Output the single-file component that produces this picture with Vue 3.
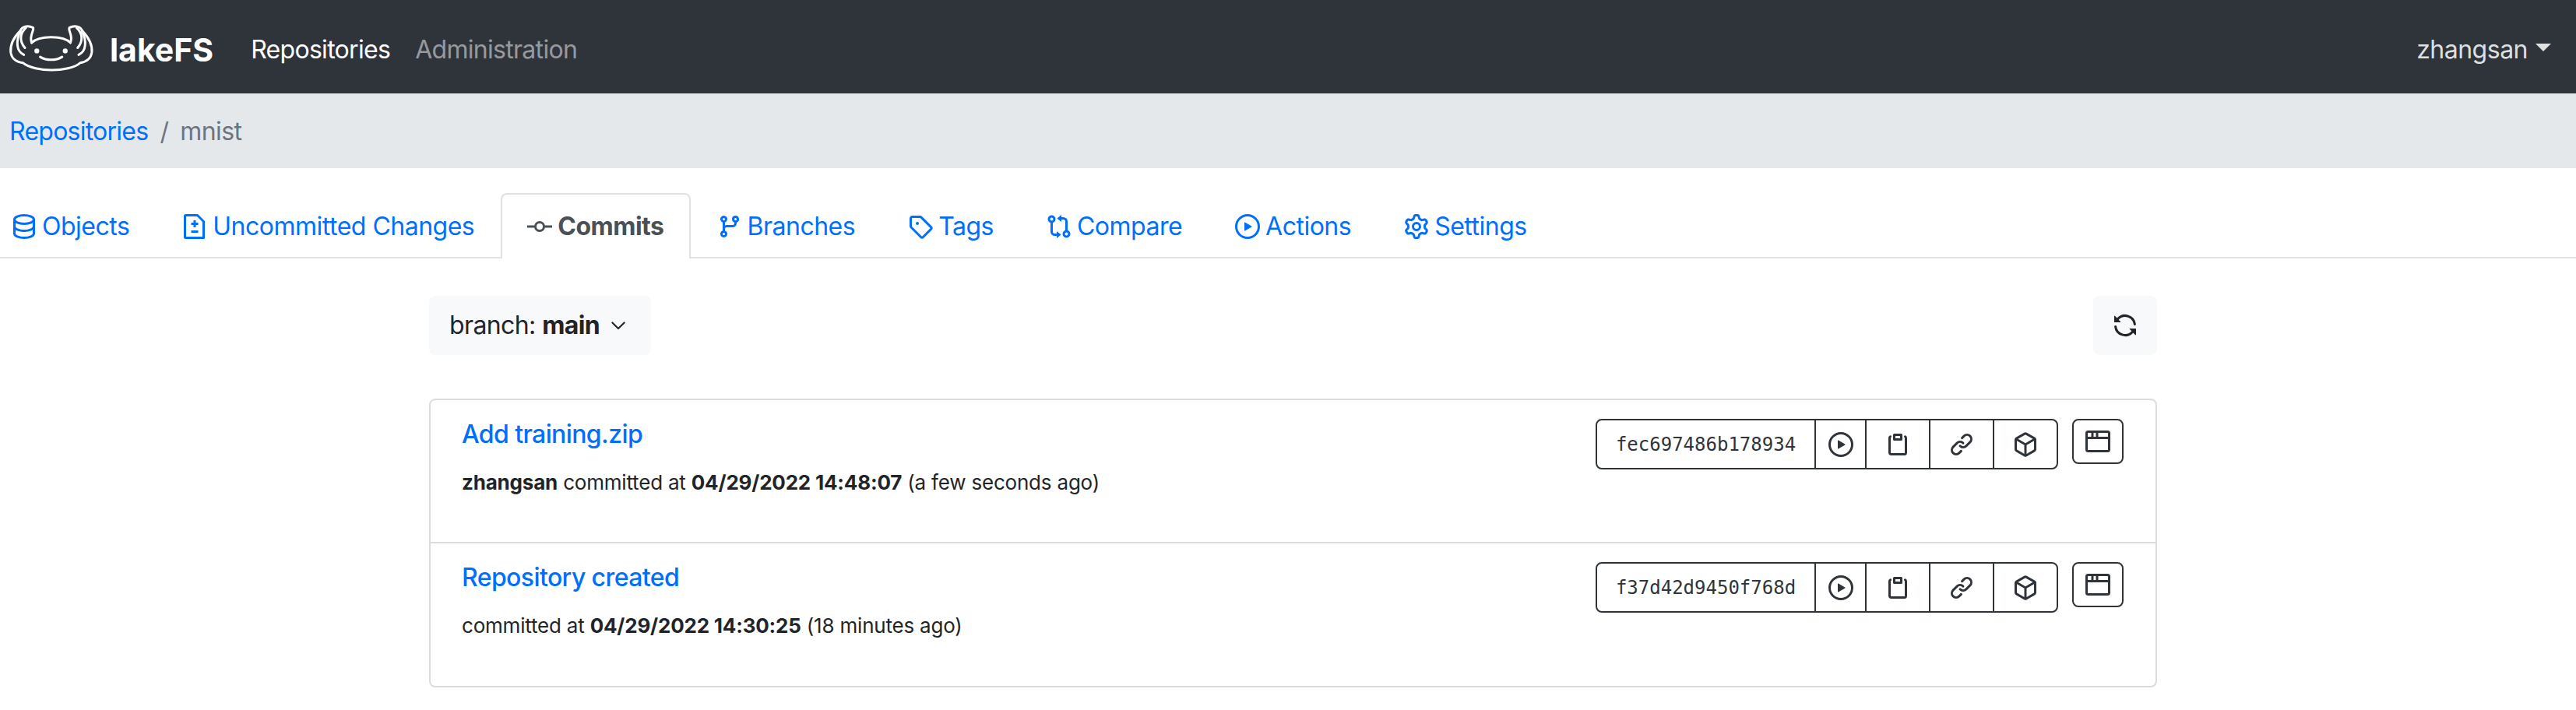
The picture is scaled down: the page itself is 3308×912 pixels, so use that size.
<script setup>
const tabs = [
  { label: "Objects", icon: "db" },
  { label: "Uncommitted Changes", icon: "diff" },
  { label: "Commits", icon: "commit", active: true },
  { label: "Branches", icon: "branch" },
  { label: "Tags", icon: "tag" },
  { label: "Compare", icon: "compare" },
  { label: "Actions", icon: "play" },
  { label: "Settings", icon: "gear" }
];

const paths = {
  branch: "M11.75 2.5a.75.75 0 100 1.5.75.75 0 000-1.5zm-2.25.75a2.25 2.25 0 113 2.122V6A2.5 2.5 0 0110 8.5H6a1 1 0 00-1 1v1.128a2.251 2.251 0 11-1.5 0V5.372a2.25 2.25 0 111.5 0v1.836A2.492 2.492 0 016 7h4a1 1 0 001-1v-.628A2.25 2.25 0 019.5 3.25zM4.25 12a.75.75 0 100 1.5.75.75 0 000-1.5zM3.5 3.25a.75.75 0 111.5 0 .75.75 0 01-1.5 0z",
  tag: "M2.5 7.775V2.75a.25.25 0 01.25-.25h5.025a.25.25 0 01.177.073l6.25 6.25a.25.25 0 010 .354l-5.025 5.025a.25.25 0 01-.354 0l-6.25-6.25a.25.25 0 01-.073-.177zm-1.5 0V2.75C1 1.784 1.784 1 2.75 1h5.025c.464 0 .91.184 1.238.513l6.25 6.25a1.75 1.75 0 010 2.474l-5.026 5.026a1.75 1.75 0 01-2.474 0l-6.25-6.25A1.75 1.75 0 011 7.775zM6 5a1 1 0 100 2 1 1 0 000-2z",
  play: "M1.5 8a6.5 6.5 0 1113 0 6.5 6.5 0 01-13 0zM8 0a8 8 0 100 16A8 8 0 008 0zM6.379 5.227A.25.25 0 006 5.442v5.117a.25.25 0 00.379.214l4.264-2.559a.25.25 0 000-.428L6.379 5.227z",
  gear: "M7.429 1.525a6.593 6.593 0 011.142 0c.036.003.108.036.137.146l.289 1.105c.147.56.55.967.997 1.189.174.086.341.183.501.29.417.278.97.423 1.53.27l1.102-.303c.11-.03.175.016.195.046.219.31.41.641.573.989.014.031.022.11-.059.19l-.815.806c-.411.406-.562.957-.53 1.456a4.588 4.588 0 010 .582c-.032.499.119 1.05.53 1.456l.815.806c.08.08.073.159.059.19a6.494 6.494 0 01-.573.99c-.02.029-.086.074-.195.045l-1.103-.303c-.559-.153-1.112-.008-1.529.27-.16.107-.327.204-.5.29-.449.222-.851.628-.998 1.189l-.289 1.105c-.029.11-.101.143-.137.146a6.613 6.613 0 01-1.142 0c-.036-.003-.108-.037-.137-.146l-.289-1.105c-.147-.56-.55-.967-.997-1.189a4.502 4.502 0 01-.501-.29c-.417-.278-.97-.423-1.53-.27l-1.102.303c-.11.03-.175-.016-.195-.046a6.492 6.492 0 01-.573-.989c-.014-.031-.022-.11.059-.19l.815-.806c.411-.406.562-.957.53-1.456a4.587 4.587 0 010-.582c.032-.499-.119-1.05-.53-1.456l-.815-.806c-.08-.08-.073-.159-.059-.19a6.44 6.44 0 01.573-.99c.02-.029.086-.075.195-.045l1.103.303c.559.153 1.112.008 1.529-.27.16-.107.327-.204.5-.29.449-.222.851-.628.998-1.189l.289-1.105c.029-.11.101-.143.137-.146zM8 0c-.236 0-.47.01-.701.03-.743.065-1.29.615-1.458 1.261l-.29 1.106c-.017.066-.078.158-.211.224a5.994 5.994 0 00-.668.386c-.123.082-.233.09-.3.071L3.27 2.776c-.644-.177-1.392.02-1.82.63a7.977 7.977 0 00-.704 1.217c-.315.675-.111 1.422.363 1.891l.815.806c.05.048.098.147.088.294a6.084 6.084 0 000 .772c.01.147-.038.246-.088.294l-.815.806c-.474.469-.678 1.216-.363 1.891.2.428.436.835.704 1.218.428.609 1.176.806 1.82.63l1.103-.303c.066-.019.176-.011.299.071.213.143.436.272.668.386.133.066.194.158.212.224l.289 1.106c.169.646.715 1.196 1.458 1.26a8.094 8.094 0 001.402 0c.743-.064 1.29-.614 1.458-1.26l.29-1.106c.017-.066.078-.158.211-.224a5.98 5.98 0 00.668-.386c.123-.082.233-.09.3-.071l1.102.302c.644.177 1.392-.02 1.82-.63.268-.382.505-.789.704-1.217.315-.675.111-1.422-.364-1.891l-.814-.806c-.05-.048-.098-.147-.088-.294a6.1 6.1 0 000-.772c-.01-.147.039-.246.088-.294l.814-.806c.475-.469.679-1.216.364-1.891a7.992 7.992 0 00-.704-1.218c-.428-.609-1.176-.806-1.82-.63l-1.103.303c-.066.019-.176.011-.299-.071a5.991 5.991 0 00-.668-.386c-.133-.066-.194-.158-.212-.224L10.16 1.29C9.99.645 9.444.095 8.701.031A8.094 8.094 0 008 0zm1.5 8a1.5 1.5 0 11-3 0 1.5 1.5 0 013 0zM11 8a3 3 0 11-6 0 3 3 0 016 0z",
  sync: "M8 2.5a5.487 5.487 0 00-4.131 1.869l1.204 1.204A.25.25 0 014.896 6H1.25A.25.25 0 011 5.75V2.104a.25.25 0 01.427-.177l1.38 1.38A7.001 7.001 0 0114.95 7.16a.75.75 0 11-1.49.178A5.501 5.501 0 008 2.5zM1.705 8.005a.75.75 0 01.834.656 5.501 5.501 0 009.592 2.97l-1.204-1.204a.25.25 0 01.177-.427h3.646a.25.25 0 01.25.25v3.646a.25.25 0 01-.427.177l-1.38-1.38A7.001 7.001 0 011.05 8.84a.75.75 0 01.656-.834z",
  clippy: "M5.75 1a.75.75 0 00-.75.75v3c0 .414.336.75.75.75h4.5a.75.75 0 00.75-.75v-3a.75.75 0 00-.75-.75h-4.5zm.75 3V2.5h3V4h-3zm-2.874-.467a.75.75 0 00-.752-1.298A1.75 1.75 0 002 3.75v9.5c0 .966.784 1.75 1.75 1.75h8.5A1.75 1.75 0 0014 13.25v-9.5a1.75 1.75 0 00-.874-1.515.75.75 0 10-.752 1.298.25.25 0 01.126.217v9.5a.25.25 0 01-.25.25h-8.5a.25.25 0 01-.25-.25v-9.5a.25.25 0 01.126-.217z",
  link: "M7.775 3.275a.75.75 0 001.06 1.06l1.25-1.25a2 2 0 112.83 2.83l-2.5 2.5a2 2 0 01-2.83 0 .75.75 0 00-1.06 1.06 3.5 3.5 0 004.95 0l2.5-2.5a3.5 3.5 0 00-4.95-4.95l-1.25 1.25zm-4.69 9.64a2 2 0 010-2.83l2.5-2.5a2 2 0 012.83 0 .75.75 0 001.06-1.06 3.5 3.5 0 00-4.95 0l-2.5 2.5a3.5 3.5 0 004.95 4.95l1.25-1.25a.75.75 0 00-1.06-1.06l-1.25 1.25a2 2 0 01-2.83 0z",
  pkg: "M8.878.392a1.75 1.75 0 00-1.756 0l-5.25 3.045A1.75 1.75 0 001 4.951v6.098c0 .624.332 1.2.872 1.514l5.25 3.045a1.75 1.75 0 001.756 0l5.25-3.045c.54-.313.872-.89.872-1.514V4.951c0-.624-.332-1.2-.872-1.514L8.878.392zM7.875 1.69a.25.25 0 01.25 0l4.63 2.685L8 7.133 3.245 4.375l4.63-2.685zM2.5 5.677v5.372c0 .09.047.171.125.216l4.625 2.683V8.432L2.5 5.677zm6.25 8.271l4.625-2.683a.25.25 0 00.125-.216V5.677L8.75 8.432v5.516z"
};

const commits = [
  { title: "Add training.zip", who: "zhangsan", date: "04/29/2022 14:48:07", ago: "(a few seconds ago)", id: "fec697486b178934" },
  { title: "Repository created", who: "", date: "04/29/2022 14:30:25", ago: "(18 minutes ago)", id: "f37d42d9450f768d" }
];
</script>

<template>
  <div class="page">
    <nav class="navbar">
      <a class="brand">
        <svg class="logo" viewBox="30 80 340 190" fill="none" stroke="#fff" stroke-width="9" stroke-linecap="round" stroke-linejoin="round">
          <path d="M122 158C150 130 245 128 272 158" />
          <path d="M122 158C112 130 132 112 128 100C105 88 84 96 78 112C55 135 38 165 41 195C44 218 60 232 88 236C110 255 160 264 200 264C240 264 290 255 310 236C335 232 352 218 355 195C358 165 340 135 318 112C312 96 290 88 268 100C262 112 284 130 272 158" />
          <path d="M100 100C78 120 72 150 96 178M78 112C62 150 60 190 92 205" />
          <path d="M296 100C318 120 324 150 300 178M318 112C334 150 336 190 304 205" />
          <circle cx="142" cy="190" r="5" fill="#fff" />
          <circle cx="252" cy="190" r="5" fill="#fff" />
          <path d="M155 213C180 228 215 228 240 213" />
        </svg>
        <span class="brand-text">lakeFS</span>
      </a>
      <a class="nav-link on">Repositories</a>
      <a class="nav-link">Administration</a>
      <a class="user">zhangsan<i class="caret"></i></a>
    </nav>

    <div class="crumbs">
      <a class="blue">Repositories</a>
      <span class="sep">/</span>
      <span class="current">mnist</span>
    </div>

    <div class="tabs">
      <a v-for="t in tabs" :key="t.label" class="tab" :class="{ active: t.active }">
        <svg v-if="t.icon === 'db'" class="ico" viewBox="0 0 16 16" fill="none" stroke="currentColor" stroke-width="1.5">
          <ellipse cx="8" cy="3.5" rx="6.25" ry="2.75" />
          <path d="M1.75 3.5v9c0 1.5 2.8 2.75 6.25 2.75s6.25-1.25 6.25-2.75v-9M1.75 8c0 1.5 2.8 2.75 6.25 2.75S14.25 9.5 14.25 8" />
        </svg>
        <svg v-else-if="t.icon === 'diff'" class="ico" viewBox="0 0 16 16" fill="none" stroke="currentColor" stroke-width="1.5" stroke-linejoin="round">
          <path d="M2.25.75h7.5l4 4v10.5h-11.5a.5.5 0 01-.5-.5V1.25a.5.5 0 01.5-.5zM8 4v4.5M5.75 6.25h4.5M5.75 11.25h4.5" />
        </svg>
        <svg v-else-if="t.icon === 'commit'" class="ico" viewBox="0 0 16 16" fill="none" stroke="currentColor" stroke-width="1.5">
          <circle cx="8" cy="8" r="2.75" />
          <path d="M0 8h5.25M10.75 8H16" />
        </svg>
        <svg v-else-if="t.icon === 'compare'" class="ico" viewBox="0 0 16 16" fill="none" stroke="currentColor" stroke-width="1.5">
          <circle cx="3.25" cy="3.25" r="1.75" />
          <circle cx="12.75" cy="12.75" r="1.75" />
          <path d="M3.25 5v6.25a2 2 0 002 2H8M12.75 11V4.75a2 2 0 00-2-2H8" />
          <path d="M9.5.5L6.7 2.75 9.5 5zM6.5 11l2.8 2.25-2.8 2.25z" fill="currentColor" stroke="none" />
        </svg>
        <svg v-else class="ico" viewBox="0 0 16 16" fill="currentColor"><path fill-rule="evenodd" :d="paths[t.icon]" /></svg>
        <span>{{ t.label }}</span>
      </a>
    </div>

    <main class="content">
      <div class="action-bar">
        <button class="btn-light branch">
          <span>branch: <b>main</b></span>
          <svg class="chev" viewBox="0 0 16 16" fill="currentColor"><path d="M2.4 5.1a.7.7 0 011 0L8 9.7l4.6-4.6a.7.7 0 011 1l-5.1 5.1a.7.7 0 01-1 0L2.4 6.1a.7.7 0 010-1z" /></svg>
        </button>
        <button class="btn-light refresh">
          <svg class="ico" viewBox="0 0 16 16" fill="currentColor"><path fill-rule="evenodd" :d="paths.sync" /></svg>
        </button>
      </div>

      <div class="list">
        <div v-for="c in commits" :key="c.id" class="row">
          <div class="info">
            <a class="title">{{ c.title }}</a>
            <p class="meta"><template v-if="c.who"><b>{{ c.who }}</b>{{ " " }}</template>committed at <b>{{ c.date }}</b> {{ c.ago }}</p>
          </div>
          <div class="group">
            <span class="g-btn hash">{{ c.id }}</span>
            <span class="g-btn play"><svg class="ico" viewBox="0 0 16 16" fill="currentColor"><path fill-rule="evenodd" :d="paths.play" /></svg></span>
            <span class="g-btn"><svg class="ico" viewBox="0 0 16 16" fill="currentColor"><path fill-rule="evenodd" :d="paths.clippy" /></svg></span>
            <span class="g-btn"><svg class="ico" viewBox="0 0 16 16" fill="currentColor"><path fill-rule="evenodd" :d="paths.link" /></svg></span>
            <span class="g-btn"><svg class="ico" viewBox="0 0 16 16" fill="currentColor"><path fill-rule="evenodd" :d="paths.pkg" /></svg></span>
          </div>
          <span class="browse">
            <svg class="ico" viewBox="0 0 16 16" fill="none" stroke="currentColor" stroke-width="1.5" stroke-linejoin="round">
              <rect x=".75" y="1.75" width="14.5" height="12.5" rx="1" />
              <path d="M1 5.75h14M4.5 2v3.5M7.5 2v3.5" />
            </svg>
          </span>
        </div>
      </div>
    </main>
  </div>
</template>

<style>
body {
  background: #fff;
}
</style>

<style scoped>
.page {
  font-family: Inter, "Liberation Sans", sans-serif;
  font-size: 32px;
  line-height: 48px;
  letter-spacing: -0.6px;
  color: #212529;
  min-height: 912px;
}
.navbar {
  display: flex;
  align-items: center;
  height: 120px;
  padding: 0 32px 0 10px;
  box-sizing: border-box;
  background: #2f343b;
}
.brand {
  display: flex;
  align-items: center;
  gap: 18px;
  margin-right: 32px;
}
.logo {
  width: 113px;
  height: 63px;
}
.brand-text {
  padding-top: 8px;
  font-size: 41px;
  font-weight: 700;
  letter-spacing: 0;
  color: #fff;
}
.nav-link {
  padding: 8px 16px 0;
  letter-spacing: -0.7px;
  color: rgba(255, 255, 255, 0.5);
}
.nav-link.on {
  color: #fff;
}
.user {
  margin-left: auto;
  padding-top: 8px;
  display: flex;
  align-items: center;
  letter-spacing: -0.5px;
  color: rgba(255, 255, 255, 0.85);
}
.caret {
  width: 0;
  height: 0;
  margin-left: 10px;
  margin-top: -6px;
  border-top: 10px solid rgba(255, 255, 255, 0.85);
  border-left: 10px solid transparent;
  border-right: 10px solid transparent;
}
.crumbs {
  display: flex;
  align-items: center;
  gap: 15px;
  height: 96px;
  padding: 2px 0 0 12px;
  box-sizing: border-box;
  background: #e5e8eb;
}
.blue {
  color: #006ffb;
  letter-spacing: -0.75px;
}
.sep,
.current {
  color: #6c757d;
}
.tabs {
  display: flex;
  margin-top: 32px;
  border-bottom: 2px solid #dee2e6;
  letter-spacing: -0.5px;
}
.tab {
  display: flex;
  align-items: center;
  gap: 7px;
  padding: 16px 32px;
  border: 2px solid transparent;
  border-bottom: 0;
  margin-bottom: -2px;
  color: #006ffb;
  box-sizing: border-box;
  height: 84px;
}
.tab:first-child {
  padding-left: 13px;
}
.tab.active {
  color: #495057;
  font-weight: 700;
  background: #fff;
  border-color: #dee2e6;
  border-radius: 8px 8px 0 0;
}
.ico {
  width: 32px;
  height: 32px;
  flex: none;
}
.content {
  width: 2219px;
  margin-left: 551px;
  padding-top: 48px;
}
.action-bar {
  display: flex;
  justify-content: space-between;
}
.btn-light {
  display: flex;
  align-items: center;
  height: 76px;
  border: 0;
  border-radius: 8px;
  background: #f8f9fa;
  color: #212529;
  font: inherit;
  letter-spacing: inherit;
}
.branch {
  gap: 12px;
  padding: 0 30px 0 26px;
}
.chev {
  width: 24px;
  height: 24px;
}
.refresh {
  padding: 0 25px;
}
.list {
  margin-top: 56px;
  border: 2px solid #dcdcdc;
  border-radius: 8px;
}
.row {
  display: flex;
  align-items: flex-start;
  height: 184px;
  box-sizing: border-box;
  padding: 24px 41px 0 40px;
  border-bottom: 2px solid #dcdcdc;
}
.row:last-child {
  height: 183px;
  border-bottom: 0;
}
.info {
  flex: 1;
}
.title {
  display: block;
  margin-top: -4px;
  color: #006ffb;
  font-weight: 500;
}
.meta {
  margin: 17px 0 0;
  font-size: 26px;
  line-height: 42px;
  letter-spacing: -0.2px;
}
.group {
  display: flex;
  height: 65px;
  box-sizing: border-box;
  border: 2px solid #2f343b;
  border-radius: 8px;
  color: #2f343b;
}
.g-btn {
  display: flex;
  align-items: center;
  justify-content: center;
  width: 82px;
  border-left: 2px solid #2f343b;
  box-sizing: border-box;
}
.g-btn.play {
  width: 65px;
}
.g-btn.hash {
  width: 279px;
  border-left: 0;
  font-family: "DejaVu Sans Mono", monospace;
  font-size: 24px;
  letter-spacing: 0;
}
.browse {
  display: flex;
  align-items: center;
  justify-content: center;
  width: 66px;
  height: 58px;
  margin-left: 18px;
  box-sizing: border-box;
  border: 2px solid #2f343b;
  border-radius: 8px;
  color: #2f343b;
}
</style>
